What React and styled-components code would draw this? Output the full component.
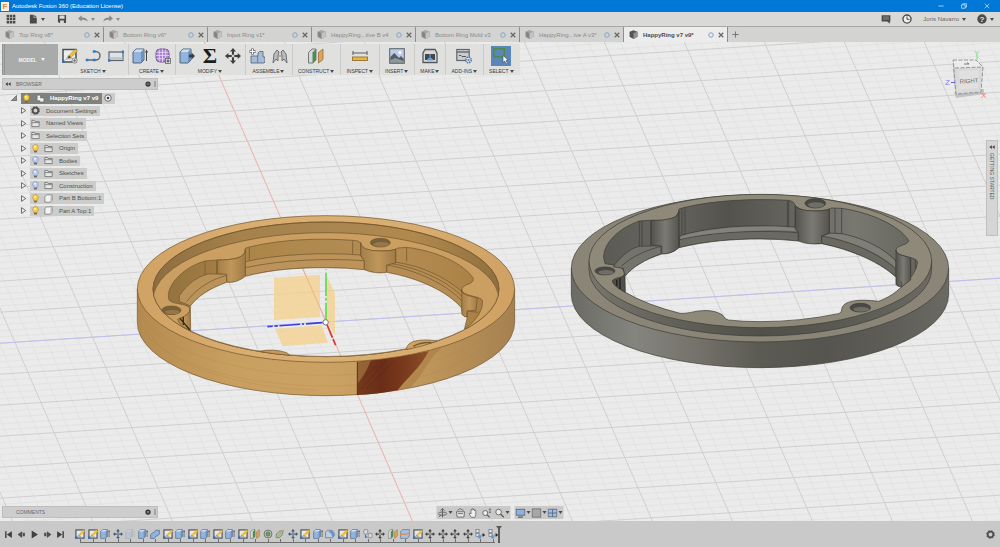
import styled, { createGlobalStyle, css } from "styled-components";

const GlobalStyle = createGlobalStyle`
  * {
    box-sizing: border-box;
  }
  html, body, #root {
    height: 100%;
    margin: 0;
  }
  body {
    font-family: "Liberation Sans", Arial, sans-serif;
    font-size: 6px;
    line-height: 8px;
    color: #4a4a48;
    background: #ebebeb;
    overflow: hidden;
  }
  button {
    font: inherit;
    color: inherit;
    background: none;
    border: 0;
    padding: 0;
    display: flex;
    align-items: center;
  }
  svg {
    display: block;
    flex: none;
  }
`;

/* ---------- data ---------- */

const documents = [
  "Top Ring v8*",
  "Bottom Ring v6*",
  "Input Ring v1*",
  "HappyRing...tive B v4",
  "Bottom Ring Mold v3",
  "HappyRing...ive A v3*",
  "HappyRing v7 v9*",
];

const toolGroups = [
  { label: "SKETCH", tools: ["sketch", "line", "rectangle"] },
  { label: "CREATE", tools: ["extrude", "form"] },
  { label: "MODIFY", tools: ["pressPull", "sigma", "move"] },
  { label: "ASSEMBLE", tools: ["component", "joint"] },
  { label: "CONSTRUCT", tools: ["plane"] },
  { label: "INSPECT", tools: ["measure"] },
  { label: "INSERT", tools: ["image"] },
  { label: "MAKE", tools: ["print"] },
  { label: "ADD-INS", tools: ["addins"] },
  { label: "SELECT", tools: ["select"], active: true },
];

const treeItems = [
  { label: "Document Settings", icon: "gear" },
  { label: "Named Views", icon: "folder" },
  { label: "Selection Sets", icon: "folder" },
  { label: "Origin", icon: "folder", bulb: "on" },
  { label: "Bodies", icon: "folder", bulb: "off" },
  { label: "Sketches", icon: "folder", bulb: "off" },
  { label: "Construction", icon: "folder", bulb: "off" },
  { label: "Part B Bottom:1", icon: "body", bulb: "on" },
  { label: "Part A Top:1", icon: "body", bulb: "on" },
];

const features = [
  "sketch", "sketch", "extrude", "moveBlue", "ghost", "extrude", "combine",
  "sketch", "extrude", "sketch", "extrude", "sketch", "extrude", "sketch",
  "plane", "thread", "axis", "moveBlue", "sketch", "extrude", "fillet",
  "sketch", "extrude", "link", "move", "plane", "split", "sketch",
  "move", "move", "move", "move", "pattern", "pattern",
];

/* ---------- icons ---------- */

const moveArrows = (fill, center) => (
  <>
    <path
      d="M8 0l3 3.4H9V6H7V3.4H5zM8 16l3-3.4H9V10H7v2.6H5zM0 8l3.4-3v2H6v2H3.4v2zM16 8l-3.4-3v2H10v2h2.6v2z"
      fill={fill}
    />
    <circle cx="8" cy="8" r="1.6" fill={center} stroke={fill} strokeWidth=".7" />
  </>
);

const block = (
  <>
    <path d="M1 4l3-3h8v11l-3 3H1z" fill="#93b5dd" stroke="#53657c" />
    <path d="M1.5 4L4 1.5h7.5L9 4z" fill="#cfe0f4" />
    <path d="M9 4l2.7-2.7v10.4L9 14.5z" fill="#6d92c2" />
  </>
);

const glyphs = {
  sketch: (
    <>
      <rect x="1" y="1.5" width="13" height="12.5" fill="#ececec" stroke="#4b5056" strokeWidth="1.5" />
      <path d="M3 12l3-5 5 4z" fill="#b7bcc2" />
      <path d="M6 10l1-2.6L13.5 1l2 2L9 9.4z" fill="#f2c02e" stroke="#8b7534" strokeWidth=".5" />
      <path d="M6 10l1-2.6L9 9.4z" fill="#333" />
      <circle cx="12.6" cy="12.6" r="2.6" fill="#d8d8d8" stroke="#777" strokeWidth=".7" />
      <path d="M12.6 11v3.2M11 12.6h3.2" stroke="#666" strokeWidth=".7" />
      <rect x=".2" y="12.4" width="2.4" height="2.4" fill="#2c6cc0" />
    </>
  ),
  sketchSmall: (
    <>
      <rect x="1.5" y="1.5" width="13" height="13" fill="#e6e8ea" stroke="#464b52" strokeWidth="1.8" />
      <path d="M3 12.500l3-4 5 4z" fill="#98a4b2" />
      <path d="M6 10.500l1-3L13.500 1l2.500 2.500L9.500 10z" fill="#f4bd22" />
      <rect x="0" y="12" width="3.500" height="3.500" fill="#2c6cc0" />
    </>
  ),
  line: (
    <>
      <path d="M2 12h8.5c6 0 6-8.500 0-8.500h-1" fill="none" stroke="#5c6a78" strokeWidth="1.4" />
      <path d="M.7 10.700h2.600v2.600H.7zM8 10.700h2.600v2.600H8zM7.800 2.200h2.600v2.600H7.800z" fill="#2f79cd" />
    </>
  ),
  rectangle: (
    <>
      <rect x="1" y="4" width="14" height="8.5" fill="#dfe2e6" stroke="#596471" strokeWidth="1.2" />
      <path d="M1.600 9h12.800v3H1.600z" fill="#c3c7cc" />
      <path d="M13.800 2.600h2.200v2.600h-2.200zM0 11.200h2.400v2.600H0z" fill="#2f79cd" />
    </>
  ),
  extrude: (
    <>
      {block}
      <path d="M14.500 13V4" stroke="#444" strokeWidth="1" />
      <path d="M14.500 1.500l1.500 3h-3z" fill="#444" />
    </>
  ),
  ghost: (
    <g opacity=".25">
      {block}
      <path d="M14.500 13V3" stroke="#666" />
    </g>
  ),
  form: (
    <>
      <rect x="1" y="1" width="13" height="13" rx="4" fill="#a887cf" stroke="#77599b" />
      <path d="M4.300 1.500v12M7.500 1v13M10.700 1.500v12M1.500 4.300h12M1 7.500h13M1.500 10.700h12" stroke="#e8dcf5" strokeWidth=".8" />
      <rect x="10.5" y="10.5" width="5" height="5" fill="#ddd" stroke="#555" strokeWidth=".7" />
      <path d="M13 11.500v3M11.500 13h3" stroke="#333" strokeWidth=".9" />
    </>
  ),
  pressPull: (
    <>
      {block}
      <path d="M10 6.500h2.500v-2L16 8l-3.500 3.500v-2H10z" fill="#3c4046" />
    </>
  ),
  move: moveArrows("#3e3e3c", "#ddd"),
  moveBlue: moveArrows("#44566f", "#7db0ea"),
  component: (
    <>
      <path d="M2 8h7V5l1.500-1.500H14V9l2 0v5l-1 1H2z" fill="#a5bdd9" stroke="#5d6b7c" strokeWidth=".9" />
      <path d="M8.700 8v7" stroke="#5d6b7c" strokeWidth=".8" />
      <path d="M3.500.5v6M.5 3.500h6" stroke="#5a5f66" strokeWidth="2.600" />
      <path d="M3.500 1v5M1 3.500h5" stroke="#fff" strokeWidth="1.200" />
    </>
  ),
  joint: (
    <>
      <path d="M1 15l1-9 3-4 2 2-1 4v5l-2-2zM15 15l-1-9-3-4-2 2 1 4v5l2-2z" fill="#b9bdc1" stroke="#62676c" strokeWidth=".9" />
      <path d="M6.800 8h2.400" stroke="#d58b2b" strokeWidth="1.400" />
    </>
  ),
  plane: (
    <>
      <path d="M.5 4.500L4 1h4v10.500L5 15H.5z" fill="#d5dad8" stroke="#5b615e" strokeWidth=".8" />
      <path d="M4.500 4.500L8 1v11l-3.500 3z" fill="#4d8b57" />
      <path d="M10.500 4.500L15 1v10.500l-4.500 3.500z" fill="#dfa552" stroke="#98703a" strokeWidth=".8" />
    </>
  ),
  measure: (
    <>
      <path d="M1 3v4M15 3v4M1 5h14" stroke="#5d6165" strokeWidth="1.100" />
      <rect x=".5" y="9" width="15" height="3.5" fill="#f0b534" stroke="#8e733a" strokeWidth=".9" />
    </>
  ),
  image: (
    <>
      <rect x=".7" y=".7" width="14.6" height="14.6" fill="#bccde8" stroke="#62676d" strokeWidth="1.100" />
      <circle cx="11" cy="4.5" r="1.5" fill="#fff" />
      <path d="M1.300 9l4-4 4.700 5 2-2 2.800 3v3.800H1.300z" fill="#555c63" />
      <path d="M1.300 12l5-2 8.500 3v1.800H1.300z" fill="#8e979d" />
    </>
  ),
  print: (
    <>
      <path d="M3 1.500h10l2 3.500v9.500H1V5z" fill="#d7d8d8" stroke="#55585b" strokeWidth="1.300" />
      <path d="M3 6h10v6H3z" fill="#44484d" />
      <path d="M8 6v3M5 12l3-2.500 3 2.500z" stroke="#6ba0d8" fill="#6ba0d8" />
    </>
  ),
  addins: (
    <>
      <rect x=".8" y="1.5" width="12.4" height="11" fill="#c9cdd1" stroke="#62676d" strokeWidth="1.200" />
      <path d="M1 4h12" stroke="#62676d" strokeWidth="1.400" />
      <path d="M3 7.500h2l1 1h4" stroke="#555" fill="none" />
      <circle cx="12.5" cy="12" r="2.7" fill="#e9eef5" stroke="#5d7ba6" strokeWidth="1.600" strokeDasharray="1.500 .6" />
      <circle cx="12.5" cy="12" r="1.1" fill="#5d7ba6" />
    </>
  ),
  select: (
    <>
      <rect x=".8" y=".8" width="10.5" height="8" fill="none" stroke="#4d8a3c" strokeWidth="1.300" />
      <path d="M10 7.500v7l1.700-1.500 1.400 3 1.300-.7-1.400-2.800 2.200-.3z" fill="#fff" stroke="#3b4652" strokeWidth=".6" />
    </>
  ),
  combine: (
    <path d="M1 9l3-3h2l3-4h6v6l-3 3h-2l-3 4H1z" fill="#8fb4e0" stroke="#4a6486" strokeWidth="1.100" />
  ),
  thread: (
    <>
      <circle cx="8" cy="8" r="6.3" fill="#c7ccc5" stroke="#5a665c" strokeWidth="1.300" />
      <circle cx="8" cy="8" r="3.5" fill="#70a375" stroke="#486b4c" />
      <circle cx="8" cy="8" r="1.2" fill="#c06a3d" />
    </>
  ),
  axis: (
    <>
      <path d="M2 8l6-5h5l-1 6-5 5H2z" fill="#a9bfa5" stroke="#5f705d" />
      <path d="M2 15L14 1" stroke="#e09a3e" strokeWidth="1.500" />
    </>
  ),
  fillet: (
    <>
      <path d="M1 5l3-3h5c4 0 6 4 6 8l-3 4H1z" fill="#c6cfd9" stroke="#56626f" />
      <path d="M5 5c4 0 6 3 6.500 8l3.500-3c0-5-3-8-6-8z" fill="#5f97dc" />
    </>
  ),
  link: (
    <>
      <rect x="1.5" y="1" width="6" height="7" rx="1" fill="#d9dde1" stroke="#66707b" />
      <rect x="8.5" y="7" width="6" height="7" rx="1" fill="#d9dde1" stroke="#66707b" />
      <path d="M4 9v4h3" stroke="#2f79cd" strokeWidth="1.800" fill="none" />
    </>
  ),
  split: (
    <>
      <path d="M1 4l3-3h11v10l-3 4H1z" fill="#a7c0e2" stroke="#5a6a7d" />
      <path d="M0 9.500c4-4 8 2 16-3" stroke="#d98c54" strokeWidth="2" fill="none" />
    </>
  ),
  pattern: (
    <>
      <rect x="1.5" y="1" width="5" height="5" fill="#dfe3e8" stroke="#5d6a79" />
      <rect x="1.5" y="7" width="5" height="5" fill="#dfe3e8" stroke="#5d6a79" />
      <rect x="5" y="10" width="5" height="5" fill="#5f97dc" />
      <path d="M10 9.500h3M12.500 7L16 9.500 12.500 12z" stroke="#222" fill="#222" strokeWidth=".6" />
    </>
  ),
  gear: (
    <>
      <circle cx="8" cy="8" r="5" fill="none" stroke="#4f504c" strokeWidth="3" />
      <circle cx="8" cy="8" r="6.6" fill="none" stroke="#4f504c" strokeWidth="2" strokeDasharray="2.800 2.380" />
    </>
  ),
  folder: <path d="M1.500 13.500V2.500h4.500l1 2h7.500v9zM1.500 6.500h13" fill="#e6e6e6" stroke="#666" strokeWidth="1.300" />,
  body: (
    <>
      <path d="M1.500 5l3-3.500h10v9l-3 4h-10z" fill="#f3f3f3" stroke="#6a6a6a" strokeWidth="1.200" strokeLinejoin="round" />
      <path d="M11.500 5v9l2.700-3.500V2z" fill="#bbb" />
    </>
  ),
  assembly: (
    <path d="M2 2h5l1 1v4h5l1 1v6H7v-2H2z" fill="#f1f1f1" stroke="#5f5f5f" />
  ),
  orbit: (
    <>
      <ellipse cx="8" cy="9" rx="7" ry="2.6" fill="none" stroke="#555" strokeWidth="1.300" />
      <path d="M8 1v14M5 4l3-3 3 3M5 11l-2 3" fill="none" stroke="#555" strokeWidth="1.400" />
    </>
  ),
  lookAt: (
    <>
      <path d="M1.500 6h13l-1 8.500h-11z" fill="#e5e5e5" stroke="#555" strokeWidth="1.200" />
      <path d="M3 4l4-3 6 3M4 9h8" fill="none" stroke="#555" strokeWidth="1.200" />
    </>
  ),
  hand: (
    <path
      d="M4.500 15L1 9.500c0-1.500 1.500-1.500 3 0V3.500c0-1.500 1.700-1.500 1.700 0V2c0-1.500 2-1.500 2 0v1c0-1.500 2-1.500 2 0v1.500c0-1.500 2-1.500 2 0V11l-1.500 4z"
      fill="#eee"
      stroke="#555"
      strokeWidth="1.100"
    />
  ),
  zoom: (
    <>
      <circle cx="6.5" cy="6.5" r="4.5" fill="#eee" stroke="#555" strokeWidth="1.300" />
      <path d="M10 10l5 5" stroke="#555" strokeWidth="2.200" />
    </>
  ),
  zoomMove: (
    <>
      <circle cx="6" cy="8" r="4" fill="#eee" stroke="#555" strokeWidth="1.300" />
      <path d="M9 11l4 4" stroke="#555" strokeWidth="2" />
      <path d="M13.500 1v7M12 3l1.500-2L15 3M12 6l1.500 2L15 6" fill="none" stroke="#555" />
    </>
  ),
  monitor: (
    <>
      <rect x="1" y="2" width="14" height="9.5" fill="#8fb2dd" stroke="#555f6b" strokeWidth="1.300" />
      <path d="M4 14.500h8" stroke="#555f6b" strokeWidth="2" />
    </>
  ),
  gridDisplay: (
    <>
      <rect x="1" y="1.5" width="14" height="13" fill="#aeb1b4" stroke="#606468" strokeWidth="1.300" />
      <path d="M1 5h14M1 8h14M1 11h14" stroke="#888" strokeWidth=".7" />
    </>
  ),
  viewports: (
    <path d="M1 2h14v12H1zM8 2v12M1 8h14" fill="#9dbde4" stroke="#56657a" strokeWidth="1.300" />
  ),
  apps: (
    <path d="M1 1h4v4H1zM6 1h4v4H6zM11 1h4v4h-4zM1 6h4v4H1zM6 6h4v4H6zM11 6h4v4h-4zM1 11h4v4H1zM6 11h4v4H6zM11 11h4v4h-4z" fill="#4b4b49" />
  ),
  file: <path d="M3 1h6v5h5v9H3zM10 1l4 4h-4z" fill="#4b4b49" />,
  save: (
    <>
      <path d="M1.500 1.500h13v13h-11l-2-2z" fill="#4b4b49" />
      <path d="M4 2.500h8v5H4zM5 10.500h6v4H5z" fill="#d9d9d7" />
    </>
  ),
  undo: <path d="M0 7l6-5v3.500c6 0 9 2 9.500 7-2-3-5-3.500-9.500-3.500V12z" fill="#8b8b89" />,
  redo: <path d="M16 7l-6-5v3.500c-6 0-9 2-9.500 7 2-3 5-3.500 9.500-3.500V12z" fill="#8b8b89" />,
  comment: (
    <>
      <path d="M1 2h14v10h-1v3.500L10 12H1z" fill="#4b4b49" />
      <path d="M3.500 5h9M3.500 8h9" stroke="#b5b5b3" />
    </>
  ),
  clock: (
    <>
      <circle cx="8" cy="8" r="6.5" fill="#eee" stroke="#4b4b49" strokeWidth="2.200" />
      <path d="M8 4v4.500h4" fill="none" stroke="#4b4b49" strokeWidth="1.600" />
    </>
  ),
  help: (
    <>
      <circle cx="8" cy="8" r="7.5" fill="#4b4b49" />
      <text x="8" y="12.5" textAnchor="middle" fontSize="13" fontWeight="700" fill="#e5e5e5">?</text>
    </>
  ),
  cube: (
    <>
      <path d="M1 3l7-2.500L15 3v9l-7 4-7-4z" fill="#858583" />
      <path d="M1 3l7 2.500L15 3 8 .5z" fill="#a8a8a6" />
      <path d="M8 5.500V16l7-4V3z" fill="#c3c3c1" />
    </>
  ),
  cubeDark: (
    <>
      <path d="M1 3l7-2.500L15 3v9l-7 4-7-4z" fill="#555553" />
      <path d="M8 5.500V16l7-4V3z" fill="#92928f" />
    </>
  ),
  toStart: <path d="M2 2h2.500v12H2zM14 2v12L5 8z" fill="#3f3f3d" />,
  stepBack: <path d="M9 2v12L1 8zM10 5h4v6h-4z" fill="#4f4f4d" />,
  play: <path d="M3 1l11 7-11 7z" fill="#3f3f3d" />,
  stepForward: <path d="M7 2v12l8-6zM2 5h4v6H2z" fill="#4f4f4d" />,
  toEnd: <path d="M11.500 2H14v12h-2.500zM2 2v12l9-6z" fill="#3f3f3d" />,
  minimize: <path d="M1 8h14" stroke="#fff" strokeWidth="1.600" />,
  restore: <path d="M1.500 5h9.500v9H1.500zM4.500 5V2h10v9H11" fill="none" stroke="#fff" strokeWidth="1.600" />,
  close: <path d="M2 2l12 12M14 2L2 14" stroke="#fff" strokeWidth="1.600" />,
  tabClose: <path d="M2 2l12 12M14 2L2 14" stroke="#686866" strokeWidth="3.400" />,
  ringMark: <circle cx="8" cy="8" r="6" fill="none" stroke="#7fa3cc" strokeWidth="2.600" />,
  plus: <path d="M8 1v14M1 8h14" stroke="#777775" strokeWidth="2.400" />,
  collapse: <path d="M7.500 3v10L1 8zM15 3v10L8.500 8z" fill="#3d3d3b" />,
  minusDot: (
    <>
      <circle cx="8" cy="8" r="7" fill="#3d3d3b" />
      <path d="M4.500 8h7" stroke="#ccc" strokeWidth="1.600" />
    </>
  ),
  plusDot: (
    <>
      <circle cx="8" cy="8" r="7" fill="#2d2d2b" />
      <path d="M4.500 8h7M8 4.500v7" stroke="#ccc" strokeWidth="1.600" />
    </>
  ),
  expander: <path d="M3.500 1.500L13 8l-9.500 6.500z" fill="#f1f1f1" stroke="#4b4b49" strokeWidth="1.800" />,
  expanded: <path d="M15 1v14H1z" fill="#8d8d8b" stroke="#4b4b49" strokeWidth="1.600" />,
  radio: (
    <>
      <circle cx="8" cy="8" r="6.5" fill="#f5f5f5" stroke="#4b4b49" strokeWidth="1.600" />
      <circle cx="8" cy="8" r="2.6" fill="#3d3d3b" />
    </>
  ),
  bulbon: (
    <>
      <path d="M8 1a5 5 0 0 1 3 9v2H5v-2a5 5 0 0 1 3-9z" fill="#ffcf3f" stroke="#b38525" />
      <circle cx="7" cy="5" r="1.8" fill="#fff5c9" />
      <path d="M5.500 12h5v3h-5z" fill="#666" />
    </>
  ),
  bulboff: (
    <>
      <path d="M8 1a5 5 0 0 1 3 9v2H5v-2a5 5 0 0 1 3-9z" fill="#b9cdf5" stroke="#7289b8" />
      <circle cx="7" cy="5" r="1.8" fill="#f3f7ff" />
      <path d="M5.500 12h5v3h-5z" fill="#666" />
    </>
  ),
};

const Icon = ({ name, size = 10 }) => (
  <svg width={size} height={size} viewBox="0 0 16 16" aria-hidden="true">
    {glyphs[name]}
  </svg>
);

/* ---------- 3D scene ---------- */

const ORIGIN = [326, 322];
const Z_STEP = [77.8, -5.06];
const X_STEP = [13.1, 30.15];

const gridLine = (from, along, n) => {
  const x = ORIGIN[0] + from[0] * n;
  const y = ORIGIN[1] + from[1] * n;
  return `M${x - along[0] * 40} ${y - along[1] * 40}L${x + along[0] * 40} ${y + along[1] * 40}`;
};

const gridPath = (step) => {
  let d = "";
  for (let i = -150; i <= 150; i += 1) {
    const major = i % 5 === 0;
    if (major === (step === "major")) {
      d += gridLine(Z_STEP, X_STEP, i / 5) + gridLine(X_STEP, Z_STEP, i / 5);
    }
  }
  return d;
};

const Floor = () => (
  <g fill="none">
    <path d={gridPath("minor")} stroke="#dfdfdf" strokeWidth=".7" />
    <path d={gridPath("major")} stroke="#cccccc" strokeWidth=".9" />
    <path d={gridLine(Z_STEP, X_STEP, 0)} stroke="#f7b3ad" strokeWidth=".9" />
    <path d={gridLine(X_STEP, Z_STEP, 0)} stroke="#bcbdef" strokeWidth=".9" />
  </g>
);

const woodHole =
  "M182 378L181 303C205 272 240 250 290 232Q320 235 346 214C430 192 510 188 588 188Q650 188 703 194Q735 208 770 202C870 220 955 262 994 308L996 328Q1000 336 1012 337L1003 374A519 202 0 0 1 182 378Z";

const WoodRing = () => (
  <g transform="translate(130 205) scale(.3333)" stroke="#75592f" strokeWidth="2.200" strokeLinejoin="round">
    <g mask="url(#woodMask)">
      <path d="M22 252V352A566 220 0 0 0 1154 352V252Z" fill="url(#woodSide)" />
      <g fill="none" stroke="#a87d42" strokeWidth="3" opacity=".2">
        <path d="M24 290A566 220 0 0 0 682 508M24 320A566 220 0 0 0 682 540M60 388A566 220 0 0 0 560 556" />
        <path d="M900 470Q1050 430 1152 320M860 520Q1040 470 1152 350" />
      </g>
      <path d="M682 470Q800 458 897 438C870 490 835 515 803 556Q740 568 682 570Z" fill="url(#burl)" stroke="none" />
      <path d="M682 470L722 467Q705 510 682 536Z" fill="#9c6f3c" stroke="none" opacity=".8" />
      <path d="M897 438C870 490 835 515 803 556L840 549C890 500 880 480 935 428Z" fill="#a87c43" stroke="none" opacity=".6" />
      <path d="M682 470V570" stroke="#3e2110" />
      <path d="M695 548L770 465M712 548L790 470M700 520L745 478" stroke="#3a1a10" strokeDasharray="3 6" />
      <ellipse cx="588" cy="252" rx="566" ry="220" fill="url(#woodTop)" />
      <ellipse cx="588" cy="253" rx="519" ry="202" fill="url(#woodWall)" />
      <g clipPath="url(#woodInner)">
        <ellipse cx="588" cy="285" rx="519" ry="202" fill="#cb9e61" />
        <path
          d="M117 285C105 250 150 190 225 168L262 165Q300 166 325 158Q348 150 346 130L358 126C450 104 560 98 668 106Q688 106 692 116Q694 138 750 138Q790 138 805 129L830 127C920 138 1000 175 1030 220C1032 240 1000 235 995 253C995 275 1055 272 1058 288Q1060 330 1003 374L590 420L182 378Q138 355 150 340Q182 330 180 310C165 292 130 300 117 285Z"
          fill="url(#woodPocket)"
        />
        <path d="M148 272C170 240 200 215 235 207L290 207V232C240 250 205 272 181 303Q170 296 148 290Z" fill="#ba935a" />
        <path d="M170 290C200 250 240 225 290 211" fill="none" />
        <path d="M346 170C450 146 590 142 690 150L703 168V196Q650 188 588 188C510 188 430 192 346 214Z" fill="#bc935a" />
        <path d="M346 188C450 165 590 159 701 167" fill="none" />
        <path d="M797 172C880 182 960 225 1000 265L996 310C955 262 870 220 770 202V180Z" fill="#b58c54" />
        <path d="M772 180C870 198 950 240 996 288M785 176C875 190 955 232 998 276" fill="none" />
        <path d="M262 165Q300 166 325 158Q345 150 346 134V214Q320 235 290 232V208L262 206Z" fill="url(#woodBoss)" />
        <path d="M692 112Q694 138 750 138Q790 138 797 132V174L770 180V202Q735 208 703 194V168L692 150Z" fill="url(#woodBoss)" />
        <path d="M995 253C995 275 1030 272 1042 280L1038 316L1012 318V337Q998 336 996 328Z" fill="url(#woodBoss)" />
        <path d="M143 343Q182 330 181 308L182 378Q150 365 143 343Z" fill="url(#woodBoss)" />
        <path d="M150 340L182 378M160 336V360" stroke="#392812" strokeWidth="4" />
        <path d="M225 168V210M260 166V207M358 127V166M668 106V148M692 118V150M797 135V172M830 128V170M1012 318L1003 374M1012 318L1045 322" fill="none" />
      </g>
      <ellipse cx="588" cy="253" rx="519" ry="202" fill="none" />
    </g>
    <path d={woodHole} fill="none" stroke="#7d6238" />
    <ellipse cx="751" cy="113" rx="30" ry="13" fill="#78603c" />
    <ellipse cx="754" cy="118" rx="24" ry="7" fill="#967748" stroke="none" />
    <ellipse cx="124" cy="316" rx="29" ry="13" fill="#78603c" />
    <ellipse cx="127" cy="321" rx="22" ry="6" fill="#967748" stroke="none" />
    <path d="M388 439Q430 430 470 443L480 451Q430 448 388 439Z" fill="#c5995d" />
    <path d="M830 434C828 408 870 400 922 408Q880 424 830 434Z" fill="#cfa266" />
    <path d="M850 424Q875 410 905 413" fill="none" strokeWidth="4" />
  </g>
);

const steelHole =
  "M196 322L195 274C215 248 255 223 305 207Q335 208 357 188C440 168 520 162 600 162Q660 162 715 168Q745 180 785 176C880 195 965 235 1008 277V298Q1010 304 1024 306C1005 325 985 338 955 349C900 342 846 345 845 375Q845 383 836 386Q720 410 600 410Q545 410 505 405Q494 402 492 395C480 380 450 376 430 377C400 378 390 386 360 385Q260 360 196 322Z";

const SteelRing = () => (
  <g transform="translate(560 185) scale(.3333)" stroke="#3f3f38" strokeWidth="2.200" strokeLinejoin="round">
    <g mask="url(#steelMask)">
      <path d="M34 250V328A566 220 0 0 0 1166 328V250Z" fill="url(#steelSide)" />
      <ellipse cx="600" cy="250" rx="566" ry="221" fill="#8a8577" />
      <path d="M87 227V253A514 200 0 0 0 1115 253V227Z" fill="url(#steelStep)" />
      <ellipse cx="601" cy="228" rx="514" ry="200" fill="#8e8979" />
      <path
        d="M131 218C130 175 175 130 238 108L270 106Q310 108 335 100Q356 94 357 72L375 67C460 46 580 40 685 46Q702 48 706 62Q720 78 760 78Q800 78 815 69L845 70C940 84 1020 125 1046 166C1046 182 1010 178 1008 196C1010 218 1070 212 1073 232Q1068 270 1024 306L600 395L196 322Q155 300 158 286C170 274 196 280 193 262C185 240 160 240 135 236Z"
        fill="url(#steelPocket)"
      />
      <path d="M160 245C185 210 215 188 240 184L303 182V207C255 223 215 248 195 274L190 250Z" fill="#74736c" />
      <path d="M185 243C215 215 255 197 303 184" fill="none" />
      <path d="M360 152C450 124 590 117 705 126L715 143V168Q660 162 600 162C520 162 440 168 357 188Z" fill="#6a6962" />
      <path d="M360 164C450 142 590 134 713 143" fill="none" />
      <path d="M362 154C450 126 590 119 705 128L710 138C590 132 450 140 360 162Z" fill="#83827b" stroke="none" />
      <path d="M805 144L845 146C910 158 980 195 1008 228V277C965 235 880 195 785 176V153Z" fill="#696861" />
      <path d="M812 146L845 148C910 160 980 197 1006 230V248C960 205 880 170 790 153Z" fill="#7f7e77" stroke="none" />
      <path d="M785 153C880 170 960 208 1008 252" fill="none" />
      <path d="M274 106Q310 108 335 100Q356 94 357 78V188Q335 208 305 207V183L274 180Z" fill="url(#steelBoss)" />
      <path d="M706 62Q720 78 760 78Q795 78 808 72V145L785 153V176Q745 180 715 170V143L705 130Z" fill="url(#steelBoss)" />
      <path d="M1008 196C1010 212 1038 212 1052 220V285L1024 306Q1008 304 1008 298Z" fill="url(#steelBoss)" />
      <path d="M158 286Q196 280 194 264L196 322Q155 300 158 286Z" fill="#504f49" />
      <path d="M170 285V302M180 280V312" stroke="#20201c" strokeWidth="4" />
      <path d="M238 108V184M246 107V183M272 107V181M357 80V186M366 70V150M375 67V148M682 47V124M686 48V125M706 65V128M808 73V144M825 70V144M845 70V146M1052 220V270M1066 224V250M1024 290V306" fill="none" />
    </g>
    <path d={steelHole} fill="none" />
    <ellipse cx="766" cy="55" rx="31" ry="14" fill="#494842" />
    <ellipse cx="768" cy="60" rx="24" ry="8" fill="#6f6e66" stroke="none" />
    <ellipse cx="135" cy="258" rx="30" ry="12" fill="#494842" />
    <ellipse cx="138" cy="262" rx="23" ry="7" fill="#6f6e66" stroke="none" />
    <ellipse cx="901" cy="368" rx="31" ry="13" fill="#494842" />
    <ellipse cx="904" cy="373" rx="24" ry="7" fill="#6f6e66" stroke="none" />
  </g>
);

const OriginMark = () => (
  <g transform="translate(130 205) scale(.3333)">
    <path
      d="M432 218L570 209V336L432 345ZM435 371L575 361L594 413L458 424ZM590 212L615 265V390L590 350Z"
      fill="#f5d08a"
      fillOpacity=".75"
    />
    <path d="M519 193L590 352" stroke="#e8ab85" strokeWidth="2" />
    <path d="M588 345V193" stroke="#58e04b" strokeWidth="5" strokeDasharray="52 6 8 6 70 8" />
    <path d="M578 353L412 365" stroke="#3a3df0" strokeWidth="5" strokeDasharray="50 6 6 6 62 5 10 5" />
    <path d="M591 359L617 421" stroke="#e8302c" strokeWidth="5" strokeDasharray="42 5 20" />
    <circle cx="587" cy="352" r="8" fill="#fff" stroke="#777" strokeWidth="3" />
  </g>
);

const gradients = {
  woodSide: ["#b48a50", "#c99f60", "#cba264", "#c0975b", "#a68150"],
  woodTop: ["#d0a264", "#d9ac6f", "#dbae71", "#d9ac6f", "#cfa163"],
  woodWall: ["#8d6e41", "#a5814c", "#a98550", "#b1894f", "#90703f"],
  woodPocket: ["#94733f", "#ab8448", "#b08b51", "#b38b51", "#aa8046"],
  woodBoss: ["#a27f49", "#c0965a", "#9f7b46"],
  burl: ["#74391d", "#6b2d18", "#793a1d", "#8b5229"],
  steelSide: ["#6b6a65", "#85857f", "#74726a", "#5b5a53", "#55544e", "#5d5c56", "#6a6962"],
  steelStep: ["#77756c", "#62615a", "#504f49", "#5b5a53", "#6c6a62"],
  steelPocket: ["#5b5a54", "#66655f", "#53524c", "#65645e", "#787770", "#66655e"],
  steelBoss: ["#53524c", "#7b7a73", "#55544e"],
};

const Scene = () => (
  <SceneSvg viewBox="0 42 1000 479" preserveAspectRatio="xMidYMid slice" aria-hidden="true">
    <defs>
      {Object.entries(gradients).map(([id, stops]) => (
        <linearGradient id={id} key={id}>
          {stops.map((color, i) => (
            <stop key={i} offset={i / (stops.length - 1)} stopColor={color} />
          ))}
        </linearGradient>
      ))}
      <clipPath id="woodInner">
        <ellipse cx="588" cy="253" rx="519" ry="202" />
      </clipPath>
      <mask id="woodMask" maskUnits="userSpaceOnUse" x="0" y="0" width="1200" height="600">
        <rect width="1200" height="600" fill="#fff" stroke="none" />
        <path d={woodHole} fill="#000" stroke="none" />
      </mask>
      <mask id="steelMask" maskUnits="userSpaceOnUse" x="0" y="0" width="1200" height="600">
        <rect width="1200" height="600" fill="#fff" stroke="none" />
        <path d={steelHole} fill="#000" stroke="none" />
      </mask>
    </defs>
    <Floor />
    <WoodRing />
    <SteelRing />
    <OriginMark />
  </SceneSvg>
);

const ViewCube = () => (
  <svg width="48" height="54" viewBox="942 47 48 54" fontSize="8">
    <path d="M954 92L984 89L984 94L956 98Z" fill="#aaa" opacity=".6" />
    <path d="M953 60L976 60L983 67L955 68Z" fill="#ececec" />
    <path d="M955 68L983 67L981 92L956 94Z" fill="#d9d9d9" />
    <path d="M959 71L979 70L978 88L959 90Z" fill="#e0e0e0" />
    <path d="M953 60L955 68L956 94L954 84Z" fill="#c9c9c9" />
    <path d="M953 60H976L983 67L981 92L956 94L953 60M955 68L983 67" fill="none" stroke="#8d8d8d" strokeWidth=".9" strokeDasharray="4 1.500" />
    <path d="M964 64h5l-2-1.500" fill="none" stroke="#666" strokeWidth=".8" />
    <text x="969" y="83" textAnchor="middle" fontSize="6" fill="#666" transform="rotate(-4 969 81)">RIGHT</text>
    <path d="M977 60V55" stroke="#71e86a" />
    <text x="974" y="56" fill="#71e86a">Y</text>
    <path d="M951 82.500h4" stroke="#6666e0" />
    <text x="945" y="85" fill="#7c86ee">Z</text>
    <text x="981" y="98" fill="#ee6b66">X</text>
  </svg>
);

/* ---------- parts ---------- */

const DocumentTab = ({ name, active }) => (
  <Tab $active={active}>
    <TabName type="button" role="tab" aria-selected={active}>
      <Icon name={active ? "cubeDark" : "cube"} size={9} />
      {name}
    </TabName>
    <Icon name="ringMark" size={6} />
    <button type="button" aria-label={`Close ${name}`}>
      <Icon name="tabClose" size={6} />
    </button>
  </Tab>
);

const ToolGroup = ({ label, tools, active }) => (
  <Group>
    <ToolRow>
      {tools.map((tool) => (
        <ToolButton key={tool} type="button" aria-label={tool} $active={active}>
          {tool === "sigma" ? <Sigma>Σ</Sigma> : <Icon name={tool} size={16} />}
        </ToolButton>
      ))}
    </ToolRow>
    <GroupLabel type="button">
      {label}
      <Caret />
    </GroupLabel>
  </Group>
);

const PanelHeader = ({ title, collapsible }) => (
  <Panel>
    <PanelLead>{collapsible && <Icon name="collapse" size={6} />}</PanelLead>
    <PanelTitle>{title}</PanelTitle>
    <button type="button" aria-label={`Toggle ${title}`}>
      <Icon name={collapsible ? "minusDot" : "plusDot"} size={6} />
    </button>
    <Grip />
  </Panel>
);

const NavButton = ({ name, menu }) => (
  <NavItem type="button" aria-label={name}>
    <Icon name={name} size={10} />
    {menu && <Caret />}
  </NavItem>
);

const App = () => (
  <>
    <GlobalStyle />
    <Window>
      <TitleBar>
        <Logo>F</Logo>
        <AppTitle>Autodesk Fusion 360 (Education License)</AppTitle>
        <WindowButtons>
          {["minimize", "restore", "close"].map((name) => (
            <button key={name} type="button" aria-label={name}>
              <Icon name={name} size={6} />
            </button>
          ))}
        </WindowButtons>
      </TitleBar>

      <AppBar>
        <BarGroup $gap={12}>
          <BarButton type="button" aria-label="Data panel"><Icon name="apps" /></BarButton>
          <BarButton type="button" aria-label="File"><Icon name="file" /><Caret /></BarButton>
          <BarButton type="button" aria-label="Save"><Icon name="save" /></BarButton>
        </BarGroup>
        <BarGroup $gap={8}>
          <BarButton type="button" aria-label="Undo"><Icon name="undo" /><Caret $muted /></BarButton>
          <BarButton type="button" aria-label="Redo"><Icon name="redo" /><Caret $muted /></BarButton>
        </BarGroup>
        <Spacer />
        <BarGroup $gap={11}>
          <BarButton type="button" aria-label="Comments"><Icon name="comment" /></BarButton>
          <BarButton type="button" aria-label="Job status"><Icon name="clock" /></BarButton>
          <UserButton type="button">Joris Navarro<Caret /></UserButton>
          <BarButton type="button" aria-label="Help"><Icon name="help" /><Caret /></BarButton>
        </BarGroup>
      </AppBar>

      <TabBar role="tablist">
        {documents.map((name, i) => (
          <DocumentTab key={name} name={name} active={i === documents.length - 1} />
        ))}
        <NewTab type="button" aria-label="New design"><Icon name="plus" size={7} /></NewTab>
      </TabBar>

      <Viewport>
        <Scene />
        <LeftColumn>
          <Toolbar>
            <Workspace type="button">
              MODEL
              <Caret $light />
            </Workspace>
            {toolGroups.map((group) => (
              <ToolGroup key={group.label} {...group} />
            ))}
          </Toolbar>
          <PanelHeader title="BROWSER" collapsible />
          <Tree>
            <TreeRow $root>
              <Icon name="expanded" size={6} />
              <RootNode type="button">
                <Icon name="bulbon" size={9} />
                <Icon name="assembly" size={9} />
                HappyRing v7 v9
              </RootNode>
              <RootState><Icon name="radio" size={8} /></RootState>
            </TreeRow>
            {treeItems.map(({ label, icon, bulb }) => (
              <TreeRow key={label}>
                <Icon name="expander" size={7} />
                <TreeNode type="button">
                  {bulb && <Icon name={`bulb${bulb}`} size={9} />}
                  <Icon name={icon} size={9} />
                  {label}
                </TreeNode>
              </TreeRow>
            ))}
          </Tree>
          <Spacer />
          <PanelHeader title="COMMENTS" />
        </LeftColumn>

        <CubeHolder><ViewCube /></CubeHolder>
        <GettingStarted type="button">
          <Icon name="collapse" size={6} />
          GETTING STARTED
        </GettingStarted>
        <NavBar>
          <NavGroup $gap={3}>
            <NavButton name="orbit" menu />
            <NavButton name="lookAt" />
            <NavButton name="hand" />
            <NavButton name="zoomMove" />
            <NavButton name="zoom" menu />
          </NavGroup>
          <NavGroup $gap={1}>
            <NavButton name="monitor" menu />
            <NavButton name="gridDisplay" menu />
            <NavButton name="viewports" menu />
          </NavGroup>
        </NavBar>
      </Viewport>

      <Timeline>
        <Playback>
          {["toStart", "stepBack", "play", "stepForward", "toEnd"].map((name) => (
            <button key={name} type="button" aria-label={name}>
              <Icon name={name} size={9} />
            </button>
          ))}
        </Playback>
        <Features>
          {features.map((name, i) => (
            <Feature key={i} type="button" aria-label={name}>
              <Icon name={name === "sketch" ? "sketchSmall" : name} />
            </Feature>
          ))}
        </Features>
        <Marker />
        <Spacer />
        <button type="button" aria-label="Timeline settings"><Icon name="gear" size={9} /></button>
      </Timeline>
    </Window>
  </>
);

export default App;

/* ---------- styles ---------- */

const Window = styled.div`
  display: flex;
  flex-direction: column;
  height: 100vh;
  min-height: 300px;
`;

const TitleBar = styled.header`
  display: flex;
  align-items: center;
  gap: 3px;
  height: 12px;
  padding: 0 10px 0 1px;
  color: #fff;
  background: #0078d7;
`;

const Logo = styled.span`
  width: 8px;
  height: 9px;
  font-size: 8px;
  line-height: 9px;
  font-weight: 700;
  text-align: center;
  color: #e8892b;
  background: #fdf3e4;
`;

const AppTitle = styled.h1`
  flex: 1;
  margin: 0;
  font-size: 6px;
  font-weight: 400;
`;

const WindowButtons = styled.div`
  display: flex;
  gap: 17px;
`;

const AppBar = styled.div`
  display: flex;
  align-items: center;
  height: 14px;
  padding: 0 6px;
  background: #d9d9d7;
`;

const BarGroup = styled.div`
  display: flex;
  align-items: center;
  gap: ${({ $gap }) => $gap}px;
  & + & {
    margin-left: 11px;
  }
`;

const BarButton = styled.button`
  gap: 3px;
`;

const UserButton = styled.button`
  gap: 3px;
  color: #6a6a68;
`;

const caretColor = ({ $light, $muted }) => ($light && "#f2f2f2") || ($muted && "#8b8b89") || "#4b4b49";

const Caret = styled.i`
  border: 2px solid transparent;
  border-top: 3px solid ${caretColor};
  border-bottom: 0;
`;

const Spacer = styled.div`
  flex: 1;
`;

const TabBar = styled.div`
  display: flex;
  height: 16px;
  border-top: 1px solid #a9a9a7;
  background: #d3d3d1;
`;

const Tab = styled.div`
  display: flex;
  align-items: center;
  gap: 4px;
  flex: 0 1 104px;
  min-width: 0;
  padding: 0 3px 0 5px;
  border-right: 1px solid #8e8e8c;
  color: #8b8b89;
  background: #d3d3d1;
  ${({ $active }) =>
    $active &&
    css`
      color: #4a4a48;
      font-weight: 700;
      background: #ececec;
    `}
`;

const TabName = styled.button`
  flex: 1;
  min-width: 0;
  gap: 5px;
  white-space: nowrap;
`;

const NewTab = styled.button`
  padding: 0 4px;
`;

const Viewport = styled.main`
  position: relative;
  flex: 1;
  min-height: 0;
  display: flex;
  overflow: hidden;
  background: #ebebeb;
`;

const SceneSvg = styled.svg`
  position: absolute;
  inset: 0;
  width: 100%;
  height: 100%;
`;

const LeftColumn = styled.div`
  position: relative;
  display: flex;
  flex-direction: column;
  align-items: flex-start;
  padding: 2px 2px 3px;
`;

const Toolbar = styled.div`
  display: flex;
  height: 31px;
  margin-bottom: 3px;
  background: #e0e0df;
`;

const Workspace = styled.button`
  justify-content: center;
  gap: 4px;
  width: 56px;
  border-left: 3px double #929493;
  color: #f5f5f5;
  font-size: 5px;
  font-weight: 700;
  background: #a9abaa;
`;

const Group = styled.div`
  display: flex;
  flex-direction: column;
  align-items: center;
  justify-content: space-between;
  padding: 4px 4px 0;
  & + & {
    padding-left: 3px;
    border-left: 1px solid #cacac9;
  }
`;

const ToolRow = styled.div`
  display: flex;
  gap: 7px;
`;

const ToolButton = styled.button`
  ${({ $active }) =>
    $active &&
    css`
      margin: -2px 0;
      padding: 2px;
      background: #5a87b8;
    `}
`;

const Sigma = styled.span`
  width: 16px;
  height: 16px;
  font-family: "Liberation Serif", serif;
  font-size: 22px;
  font-weight: 700;
  line-height: 16px;
  text-align: center;
  color: #1c1c1c;
`;

const GroupLabel = styled.button`
  gap: 1px;
  padding: 0 2px;
  font-size: 5px;
  color: #3a3a38;
`;

const Panel = styled.div`
  display: flex;
  align-items: center;
  width: 156px;
  height: 12px;
  border: 1px solid #bdbdbd;
  color: #6a6a68;
  background: #cdcdcd;
`;

const PanelLead = styled.span`
  width: 13px;
  padding-left: 2px;
`;

const PanelTitle = styled.h2`
  flex: 1;
  margin: 0;
  font-size: 5px;
  font-weight: 400;
`;

const Grip = styled.i`
  width: 2px;
  height: 6px;
  margin: 0 1px 0 3px;
  border: 1px solid #a5a5a5;
`;

/* the ten rows share the height evenly */
const Tree = styled.div`
  display: grid;
  grid-auto-rows: 1fr;
  gap: 2px;
  height: 123px;
  margin-top: 3px;
`;

const TreeRow = styled.div`
  display: flex;
  align-items: center;
  gap: ${({ $root }) => ($root ? 4 : 3)}px;
  padding-left: ${({ $root }) => ($root ? 9 : 18)}px;
`;

const TreeNode = styled.button`
  align-self: stretch;
  gap: 4px;
  padding: 0 3px 0 1px;
  color: #50504e;
  background: #cccccb;
  svg + svg {
    margin-right: 2px;
  }
  svg:only-of-type {
    margin-right: 2px;
  }
`;

const RootNode = styled.button`
  align-self: stretch;
  gap: 5px;
  padding: 0 4px 0 1px;
  color: #fff;
  font-weight: 700;
  background: #80827e;
`;

const RootState = styled.span`
  display: flex;
  align-items: center;
  align-self: stretch;
  margin-left: -4px;
  padding: 0 3px 0 2px;
  background: #cccccb;
`;

const CubeHolder = styled.div`
  position: absolute;
  top: 5px;
  right: 10px;
`;

const GettingStarted = styled.button`
  position: absolute;
  top: 98px;
  right: 2px;
  width: 12px;
  height: 96px;
  padding-top: 3px;
  gap: 3px;
  writing-mode: vertical-rl;
  border: 1px solid #bfbfbf;
  color: #5a5a58;
  font-size: 5px;
  background: #d5d5d5;
`;

const NavBar = styled.nav`
  position: absolute;
  left: 50%;
  bottom: 2px;
  display: flex;
  gap: 4px;
  transform: translateX(-50%);
`;

const NavGroup = styled.div`
  display: flex;
  align-items: center;
  gap: ${({ $gap }) => $gap}px;
  height: 13px;
  padding: 0 1px;
  background: #c9c9c8;
`;

const NavItem = styled.button`
  gap: 1px;
`;

const Timeline = styled.footer`
  display: flex;
  align-items: center;
  height: 26px;
  padding: 0 5px 0 4px;
  background: #c9c9c9;
`;

const Playback = styled.div`
  display: flex;
  gap: 4px;
  margin-right: 9px;
`;

const Features = styled.div`
  display: grid;
  grid-template-columns: repeat(34, 1fr);
  flex: 0 1 425px;
  align-self: stretch;
`;

const Feature = styled.button`
  position: relative;
  justify-content: center;
  &::after {
    content: "";
    position: absolute;
    left: 50%;
    bottom: 4px;
    width: 100%;
    height: 3px;
    border-left: 1px solid #70706e;
    border-bottom: 1px solid #70706e;
  }
  &:last-child::after {
    width: 1px;
  }
`;

const Marker = styled.i`
  width: 6px;
  height: 17px;
  margin-left: -3px;
  background: linear-gradient(#5c5c5a, #5c5c5a) center / 2px 100% no-repeat;
  &::before {
    content: "";
    display: block;
    border: 3px solid transparent;
    border-top: 4px solid #5c5c5a;
    border-bottom: 0;
  }
`;
